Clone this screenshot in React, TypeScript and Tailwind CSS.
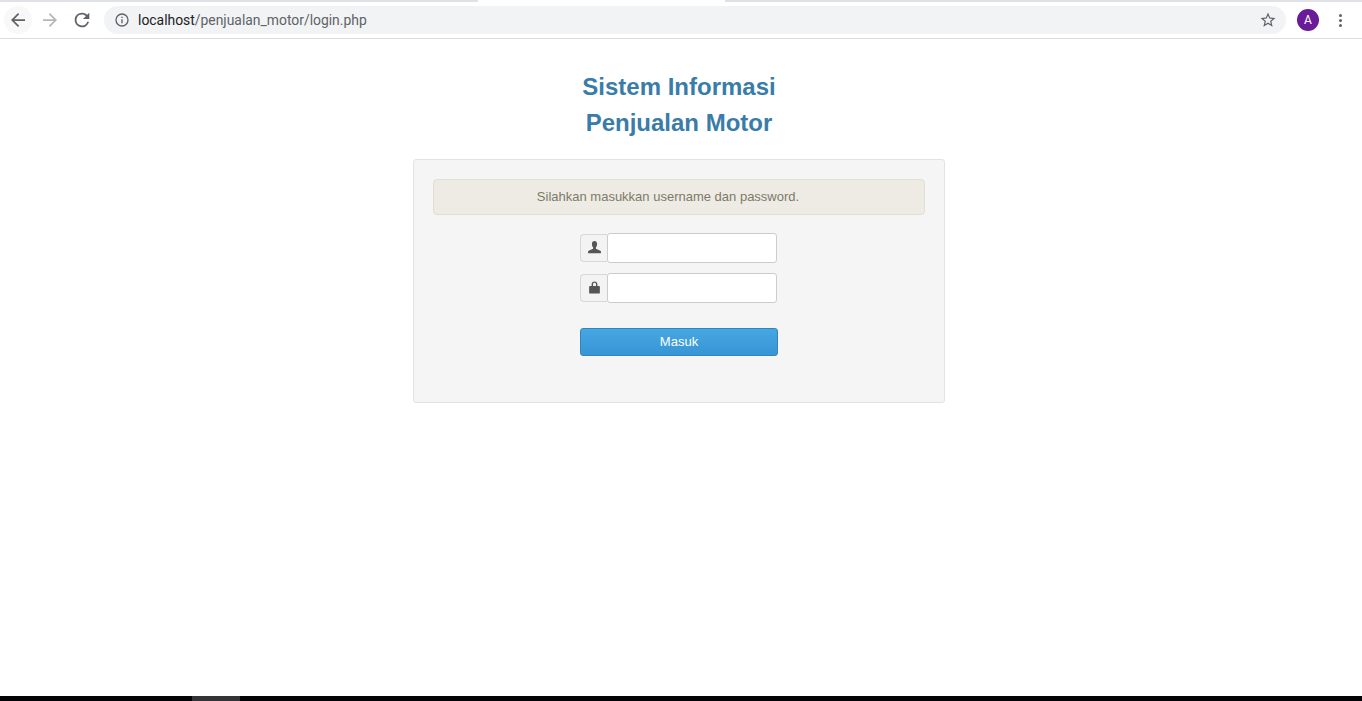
import React from 'react'

function UserIcon() {
  return (
    <svg width="15" height="15" viewBox="0 0 14 14" className="fill-[#555555]">
      <path d="M7 1C5.500 1 4.600 2.200 4.600 3.800c0 1.300.4 2.400 1.100 3.100v1.300L2 9.800c-.7.300-1 .6-1 1.200V12.300h12v-1.300c0-.6-.3-.9-1-1.200L8.300 8.200V6.900C9 6.200 9.400 5.100 9.400 3.800 9.400 2.200 8.500 1 7 1z" />
    </svg>
  )
}

function LockIcon() {
  return (
    <svg width="15" height="15" viewBox="0 0 14 14" className="fill-[#555555]">
      <path d="M4.300 5.500V4C4.300 2.400 5.400 1.300 7 1.300S9.700 2.400 9.700 4v1.500h1.500c.5 0 .8.300.8.800v5.600c0 .5-.3.800-.8.800H2.800c-.5 0-.8-.3-.8-.8V6.300c0-.5.3-.8.800-.8h1.500zm1.300 0h2.800V4c0-.9-.5-1.400-1.400-1.400S5.600 3.100 5.600 4v1.500z" />
    </svg>
  )
}

function InputRow({ icon }: { icon: React.ReactNode }) {
  return (
    <div className="flex h-[30px] w-[197px] items-center">
      <span className="flex h-[28px] w-[27px] shrink-0 items-center justify-center rounded-l-[4px] border border-r-0 border-[#d8d8d8] bg-[#f3f3f3] pb-[2px]">
        {icon}
      </span>
      <input
        type="text"
        className="h-[30px] w-[170px] rounded-[3px] border border-[#cccccc] bg-white outline-none"
      />
    </div>
  )
}

function BrowserBar() {
  return (
    <header className="shrink-0">
      <div className="flex h-[2px] bg-[#dee1e6]">
        <div className="ml-[478px] w-[247px] bg-white" />
      </div>
      <div className="flex h-[37px] items-center border-b border-[#dadce0] bg-white">
        <div className="flex w-[104px] items-center">
          <span className="ml-[4px] flex h-[28px] w-[28px] items-center justify-center rounded-full bg-[#f8f8f9]">
            <svg width="14" height="14" viewBox="0 0 16 16" className="fill-[#5f6368]">
              <path d="M16 7H3.800l5.600-5.600L8 0 0 8l8 8 1.400-1.400L3.800 9H16z" />
            </svg>
          </span>
          <span className="ml-[11px] flex h-[14px] w-[14px] items-center justify-center">
            <svg width="14" height="14" viewBox="0 0 16 16" className="fill-[#b4b6b9]">
              <path d="M0 7h12.200L6.600 1.400 8 0l8 8-8 8-1.400-1.400L12.200 9H0z" />
            </svg>
          </span>
          <span className="ml-[14px] flex h-[22px] w-[22px] items-center justify-center">
            <svg width="22" height="22" viewBox="0 0 24 24" className="fill-[#5f6368]">
              <path d="M17.650 6.350A7.960 7.960 0 0 0 12 4a8 8 0 1 0 7.730 10h-2.080A6 6 0 1 1 12 6c1.660 0 3.140.69 4.220 1.780L13 11h7V4l-2.350 2.350z" />
            </svg>
          </span>
        </div>
        <div className="flex h-[28px] w-[1182px] items-center rounded-full bg-[#f1f3f4]">
          <svg width="16" height="16" viewBox="0 0 24 24" className="ml-[10px] fill-[#5f6368]">
            <path d="M11 7h2v2h-2zm0 4h2v6h-2zm1-9a10 10 0 1 0 0 20 10 10 0 0 0 0-20zm0 18a8 8 0 1 1 0-16 8 8 0 0 1 0 16z" />
          </svg>
          <span className="ml-[8px] font-['Roboto',sans-serif] text-[13.9px] text-[#5f6368]">
            <span className="text-[#202124]">localhost</span>/penjualan_motor/login.php
          </span>
          <svg width="18" height="18" viewBox="0 0 24 24" className="ml-auto mr-[9px] fill-[#5f6368]">
            <path d="M22 9.240l-7.190-.62L12 2 9.190 8.630 2 9.240l5.460 4.730L5.820 21 12 17.270 18.180 21l-1.630-7.030L22 9.240zM12 15.400l-3.760 2.270 1-4.280-3.320-2.880 4.380-.38L12 6.100l1.710 4.040 4.380.38-3.320 2.880 1 4.280L12 15.400z" />
          </svg>
        </div>
        <span className="ml-[11px] flex h-[22px] w-[22px] items-center justify-center rounded-full bg-[#6a1b9a] font-['Roboto',sans-serif] text-[12px] text-white">
          A
        </span>
        <span className="ml-[20px] flex flex-col gap-[2px]">
          <span className="h-[3px] w-[3px] rounded-full bg-[#5f6368]" />
          <span className="h-[3px] w-[3px] rounded-full bg-[#5f6368]" />
          <span className="h-[3px] w-[3px] rounded-full bg-[#5f6368]" />
        </span>
      </div>
    </header>
  )
}

export default function App() {
  return (
    <div className="flex h-[701px] flex-col overflow-hidden bg-white font-['Liberation_Sans',sans-serif]">
      <BrowserBar />
      <main className="flex flex-1 flex-col items-center pr-[4px] pt-[30px]">
        <h1 className="text-center text-[24px] font-bold leading-[36px] text-[#3a7ca8]">
          Sistem Informasi
          <br />
          Penjualan Motor
        </h1>
        <section className="mt-[18px] flex h-[244px] w-[532px] flex-col items-center rounded-[3px] border border-[#e3e3e3] bg-[#f5f5f5] px-[19px] pt-[19px]">
          <div className="flex h-[36px] w-full items-center justify-center rounded-[4px] border border-[#e0dfd0] bg-[#edebe4] pb-[1px] pr-[22px] text-[13px] text-[#7d7a68]">
            Silahkan masukkan username dan password.
          </div>
          <form className="mt-[18px] flex w-[198px] flex-col gap-[10px]">
            <InputRow icon={<UserIcon />} />
            <InputRow icon={<LockIcon />} />
            <button
              type="button"
              className="mt-[15px] h-[28px] w-[198px] rounded-[3px] border border-[#2f86bd] bg-gradient-to-b from-[#47a7e1] to-[#3795d6] pb-[1px] text-[13px] text-white"
            >
              Masuk
            </button>
          </form>
        </section>
      </main>
      <footer className="flex h-[5px] shrink-0 bg-[#020207]">
        <div className="ml-[192px] w-[48px] bg-[#333336]" />
      </footer>
    </div>
  )
}
